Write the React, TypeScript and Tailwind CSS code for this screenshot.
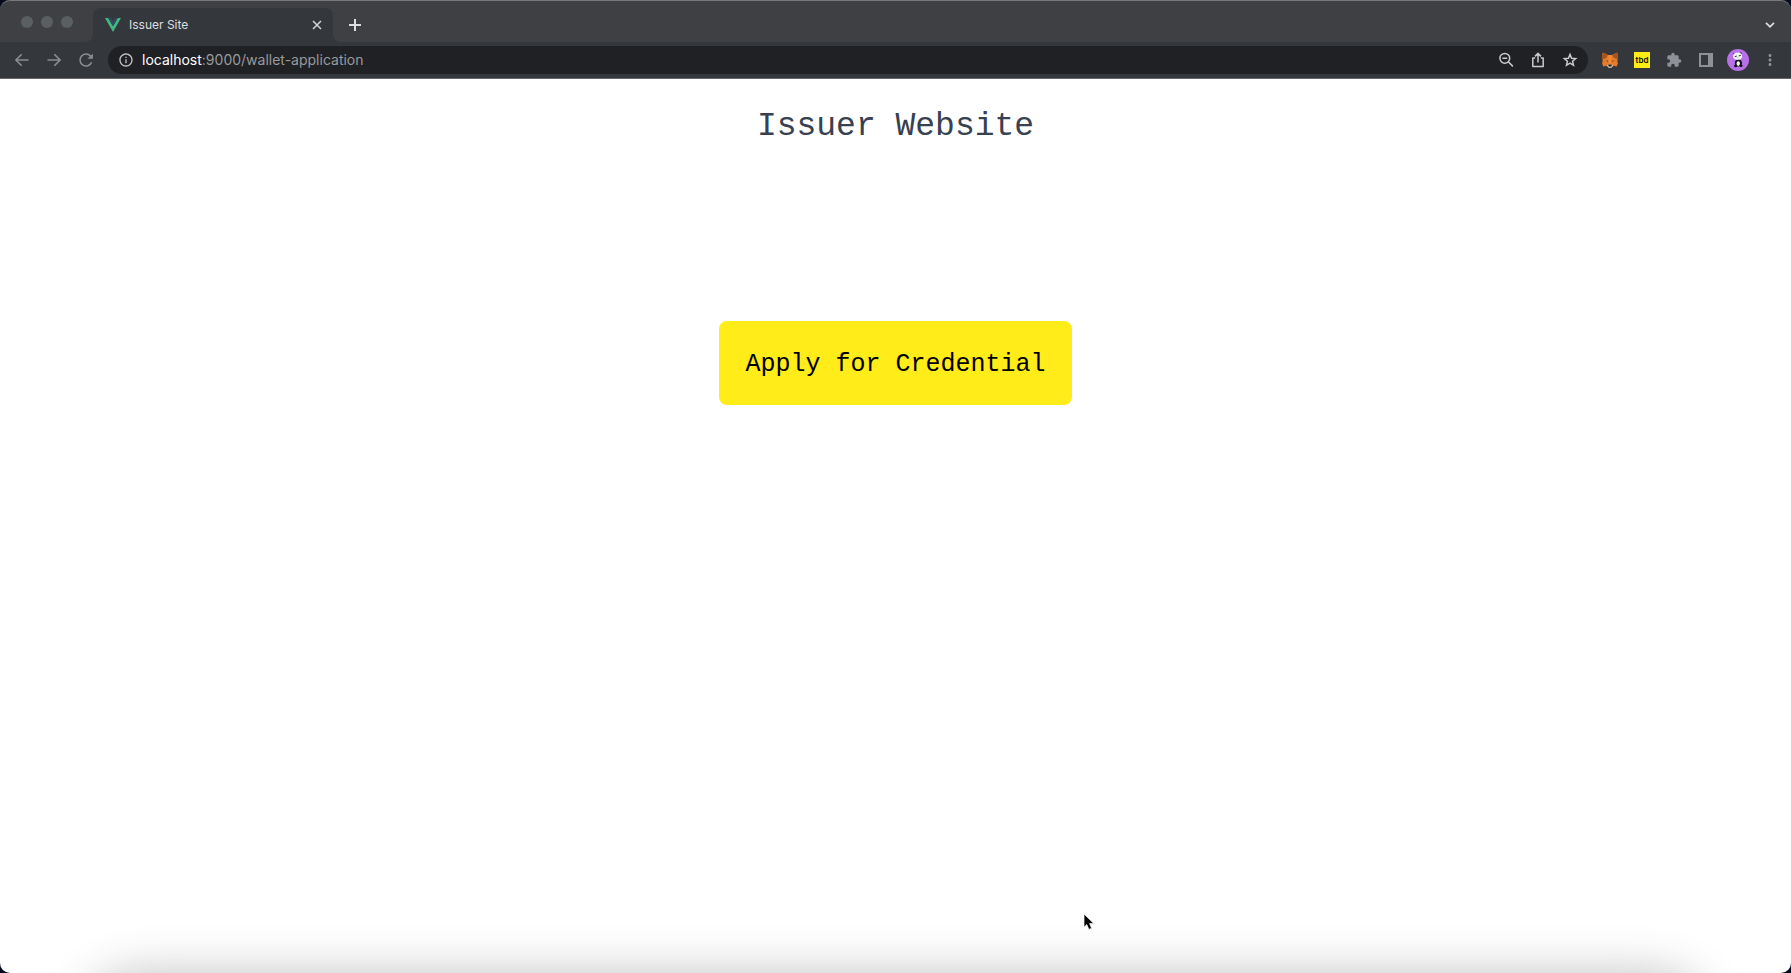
import type { ReactNode } from 'react';
import { MdExtension, MdMoreVert, MdOutlineInfo } from 'react-icons/md';

function IconButton({ label, children }: { label: string; children: ReactNode }) {
  return (
    <button type="button" aria-label={label} className="flex size-8 shrink-0 items-center justify-center">
      {children}
    </button>
  );
}

function VueLogo() {
  return (
    <svg viewBox="0 0 16 14" className="h-[14px] w-4 shrink-0" aria-hidden="true">
      <path d="M0 0h3.2L8 8.3 12.8 0H16L8 13.9z" fill="#41b883" />
      <path d="M3.2 0h2.9L8 3.3 9.9 0h2.9L8 8.3z" fill="#35495e" />
    </svg>
  );
}

function Arrow({ forward = false }: { forward?: boolean }) {
  return (
    <svg viewBox="0 0 16 16" className="size-4" fill="none" stroke="#8b8e91" strokeWidth="1.6" aria-hidden="true">
      {forward ? <path d="M1.5 8h12.6M8.3 2.2 14.1 8l-5.8 5.8" /> : <path d="M14.5 8H1.9M7.7 2.2 1.9 8l5.8 5.8" />}
    </svg>
  );
}

function ReloadIcon() {
  return (
    <svg viewBox="0 0 16 16" className="size-4" fill="none" stroke="#8b8e91" strokeWidth="1.6" aria-hidden="true">
      <path d="M13.6 10.2A6 6 0 1 1 12.5 4l1.3 1.5" />
      <path d="M14.9 1.4v5.4H9.5z" fill="#8b8e91" stroke="none" />
    </svg>
  );
}

function ZoomOutIcon() {
  return (
    <svg viewBox="0 0 16 16" className="size-4" fill="none" stroke="#c8cacc" strokeWidth="1.5" aria-hidden="true">
      <circle cx="6.8" cy="6.3" r="4.9" />
      <path d="M4.4 6.3h4.8M10.3 9.8l4.6 4.6" />
    </svg>
  );
}

function ShareIcon() {
  return (
    <svg viewBox="0 0 16 16" className="size-4" fill="none" stroke="#c8cacc" strokeWidth="1.5" strokeLinejoin="round" aria-hidden="true">
      <path d="M5.2 6H2.8v8.6h10.4V6h-2.4M8 10.6V1.8M5 4.4l3-3 3 3" />
    </svg>
  );
}

function StarIcon() {
  return (
    <svg viewBox="0 0 16 16" className="size-4" fill="none" stroke="#c8cacc" strokeWidth="1.5" aria-hidden="true">
      <path d="m8 2.4 1.6 3.8 4.1.4-3.1 2.7.9 4L8 11.2l-3.5 2.1.9-4-3.1-2.7 4.1-.4z" />
    </svg>
  );
}

function FoxIcon() {
  return (
    <svg viewBox="0 0 18 18" className="size-[18px]" aria-hidden="true">
      <path d="M1.8 1.6 7 4h4l5.2-2.4.8 4.8-.7 3 .6 3-1.3 3-3.2-.6-2 1.8H7.6l-2-1.8-3.2.6-1.3-3 .6-3-.7-3z" fill="#e57b2b" />
      <path d="M1.8 1.6 6.8 4.4 5.2 6.8 1.7 8.2 1 6.4zM16.2 1.6l-5 2.8 1.6 2.4 3.5 1.4.7-1.8z" fill="#a5531f" />
      <path d="M7 4h4l-.8 4.4.4 3.8H7.4l.4-3.8z" fill="#f08b32" />
      <path d="m4.6 9.2 2.7.9-.4 1zM13.4 9.2l-2.7.9.4 1z" fill="#5a3422" />
      <path d="m5.8 14.4 1.6-1h3.2l1.6 1-1.8 2.4H7.6z" fill="#d8c7b8" />
      <path d="M7.5 13.4h3l.3 1.4-.8.6H8l-.8-.6z" fill="#202020" />
    </svg>
  );
}

function PanelIcon() {
  return (
    <svg viewBox="0 0 14 14" className="size-[14px]" aria-hidden="true">
      <path fillRule="evenodd" d="M0 0h14v14H0zM2 2v10h7V2z" fill="#8f9295" />
    </svg>
  );
}

function PandaAvatar() {
  return (
    <svg viewBox="0 0 22 22" className="size-[22px]" aria-hidden="true">
      <circle cx="11" cy="11" r="11" fill="#b86fe8" />
      <ellipse cx="11.4" cy="14" rx="3.6" ry="3.6" fill="#15131a" />
      <circle cx="7.2" cy="5" r=".9" fill="#15131a" />
      <circle cx="13.8" cy="4.5" r=".9" fill="#15131a" />
      <ellipse cx="10.6" cy="7.2" rx="4.5" ry="3.6" fill="#f4f4f4" />
      <path d="m7.8 7.6 2-.5M11.8 6.9l2-.5" stroke="#15131a" strokeWidth=".9" />
      <circle cx="10.9" cy="8.8" r=".4" fill="#15131a" />
      <ellipse cx="11.3" cy="14.6" rx="1.7" ry="2.3" fill="#f4f4f4" />
      <ellipse cx="8.6" cy="17" rx="1.6" ry="1.3" fill="#15131a" />
      <ellipse cx="14" cy="16.8" rx="1.6" ry="1.3" fill="#15131a" />
    </svg>
  );
}

function TabStrip() {
  return (
    <div className="flex h-[42px] items-end rounded-t-[10px] border-t border-[#77797b] bg-[#3f4043]">
      <div className="flex h-[34px] w-[93px] shrink-0 bg-[#34373b]">
        <div className="flex flex-1 items-start gap-2 rounded-br-lg bg-[#3f4043] pt-2 pl-[21px]">
          <span className="size-3 rounded-full bg-[#5a605f]" />
          <span className="size-3 rounded-full bg-[#5a605f]" />
          <span className="size-3 rounded-full bg-[#5a605f]" />
        </div>
      </div>
      <div className="flex h-[34px] w-60 shrink-0 items-center rounded-t-lg bg-[#34373b] pr-2 pl-3">
        <VueLogo />
        <span className="ml-2 flex-1 text-xs text-[#dcdee0]">Issuer Site</span>
        <button type="button" aria-label="Close tab" className="flex size-4 items-center justify-center">
          <svg viewBox="0 0 10 10" className="size-[10px]" stroke="#d4d6d8" strokeWidth="1.5" aria-hidden="true">
            <path d="m1 1 8 8M9 1 1 9" />
          </svg>
        </button>
      </div>
      <div className="flex h-[34px] flex-1 bg-[#34373b]">
        <div className="flex flex-1 items-center justify-between rounded-bl-lg bg-[#3f4043] pr-[5px] pl-[6px]">
          <IconButton label="New tab">
            <svg viewBox="0 0 12 12" className="size-3" stroke="#dcdee0" strokeWidth="2" aria-hidden="true">
              <path d="M6 0v12M0 6h12" />
            </svg>
          </IconButton>
          <IconButton label="Search tabs">
            <svg viewBox="0 0 10 6" className="h-[6px] w-[10px]" fill="none" stroke="#dcdee0" strokeWidth="1.7" aria-hidden="true">
              <path d="m1 .8 4 4 4-4" />
            </svg>
          </IconButton>
        </div>
      </div>
    </div>
  );
}

function Toolbar() {
  return (
    <div className="flex h-[37px] items-center border-b border-[#66686b] bg-[#34373b] pr-[5px] pl-[6px]">
      <IconButton label="Back"><Arrow /></IconButton>
      <IconButton label="Forward"><Arrow forward /></IconButton>
      <IconButton label="Reload"><ReloadIcon /></IconButton>
      <div className="ml-[6px] flex h-7 flex-1 items-center rounded-full bg-[#202124] pr-[2px] pl-[10px]">
        <MdOutlineInfo className="size-4 shrink-0 text-[#c0c2c4]" />
        <a href="/wallet-application" className="ml-2 flex-1 text-sm text-[#989a9d]">
          <span className="text-white">localhost</span>:9000/wallet-application
        </a>
        <IconButton label="Zoom"><ZoomOutIcon /></IconButton>
        <IconButton label="Share"><ShareIcon /></IconButton>
        <IconButton label="Bookmark this tab"><StarIcon /></IconButton>
      </div>
      <div className="ml-[6px] flex items-center">
        <IconButton label="Wallet extension"><FoxIcon /></IconButton>
        <button type="button" className="flex size-8 items-center justify-center">
          <span className="flex size-4 items-center justify-center bg-[#ffec19] text-[8px] leading-none font-semibold text-black">tbd</span>
        </button>
        <IconButton label="Extensions"><MdExtension className="size-4 text-[#8f9295]" /></IconButton>
        <IconButton label="Side panel"><PanelIcon /></IconButton>
        <IconButton label="Profile"><PandaAvatar /></IconButton>
        <IconButton label="Menu"><MdMoreVert className="size-[18px] text-[#8f9295]" /></IconButton>
      </div>
    </div>
  );
}

export default function App() {
  return (
    <div className="min-h-screen bg-[#050a1c]">
      <div className="relative flex min-h-screen flex-col overflow-hidden rounded-[10px] bg-white font-['Inter',sans-serif]">
        <header className="bg-[#050a1c]">
          <TabStrip />
          <Toolbar />
        </header>
        <main className="flex flex-1 flex-col items-center pt-7 font-['Liberation_Mono',monospace]">
          <h1 className="text-[33px] leading-10 text-[#374151]">Issuer Website</h1>
          <button type="button" className="mt-[174px] rounded-lg bg-[#ffec19] px-[26px] pt-7 pb-6 text-[25px] leading-8 text-black">
            Apply for Credential
          </button>
        </main>
        <div className="pointer-events-none absolute inset-x-20 top-full h-40 rounded-[60px] shadow-[0_0_48px_rgba(0,0,0,0.24)]" />
        <svg viewBox="0 0 12 18" className="pointer-events-none absolute bottom-[42px] left-[1083px] h-[18px] w-3" aria-hidden="true">
          <path d="M1 1v13.2l2.8-2.6 2.1 4.8 2.7-1.2-2-4.6h4.2z" fill="#000" stroke="#fff" strokeWidth=".7" />
        </svg>
      </div>
    </div>
  );
}
